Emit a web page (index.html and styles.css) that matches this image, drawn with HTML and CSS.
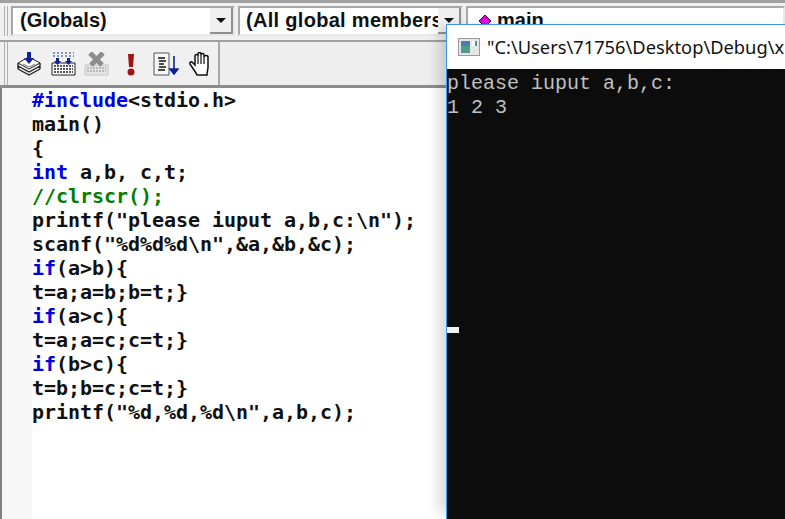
FILE: index.html
```html
<!DOCTYPE html>
<html lang="en">
<head>
<meta charset="utf-8">
<title>Visual C++ console</title>
<link rel="stylesheet" href="styles.css">
</head>
<body>
<div class="ide">
  <div class="bar bar-top">
    <div class="grip"></div>
    <div class="combo combo-a"><span class="combo-text">(Globals)</span><span class="combo-btn"><i class="arrow"></i></span></div>
    <div class="combo combo-b"><span class="combo-text">(All global members</span><span class="combo-btn"><i class="arrow"></i></span></div>
    <div class="combo combo-c"><span class="combo-text"><svg class="diamond" width="14" height="14" viewBox="0 0 14 14"><path d="M7 1 13 7 7 13 1 7Z" fill="#e000e0" stroke="#400040"/></svg>main</span></div>
  </div>
  <div class="bar bar-tools">
    <div class="grip"></div>
    <div class="tools">
      <svg class="ico i1" width="24" height="25" viewBox="0 0 24 25"><path d="M1 11 12 5 23 11 12 17Z" fill="#fff" stroke="#222"/><path d="M1 14 12 20 23 14M1 17 12 23 23 17M1 11V17M23 11V17" fill="none" stroke="#222" stroke-width="1.4"/><path d="M6 12 12 15 18 12" fill="none" stroke="#777"/><path d="M10 0H14V6H17L12 12 7 6H10Z" fill="#10209a"/></svg>
      <svg class="ico i2" width="25" height="24" viewBox="0 0 25 24"><path d="M1 11H24V23H1Z" fill="#fff" stroke="#222"/><path d="M3 14H22M3 17H22M3 20H22" stroke="#222" stroke-width="1.6" stroke-dasharray="2 1"/><path d="M5 6H8V9H10L6.500 13 3 9H5ZM16 6H19V9H21L17.500 13 14 9H16Z" fill="#10209a"/><path d="M2 1H23M2 4H23" stroke="#5a78b8" stroke-width="1.6" stroke-dasharray="2 2"/></svg>
      <svg class="ico i3" width="25" height="24" viewBox="0 0 25 24"><path d="M1 13H24V23H1Z" fill="#e4e4e4" stroke="#c4c4c4"/><path d="M3 16H22M3 19H22" stroke="#aaa" stroke-width="1.600" stroke-dasharray="2 1"/><path d="M6 1 18 13M19 1 7 13" stroke="#8c8c8c" stroke-width="5"/></svg>
      <svg class="ico i4" width="12" height="23" viewBox="0 0 12 23"><path d="M3 1H9L8 14H4Z" fill="#a01414"/><circle cx="6" cy="19" r="3.500" fill="#a01414"/></svg>
      <svg class="ico i5" width="26" height="24" viewBox="0 0 26 24"><path d="M1 1H16V23H1Z" fill="#f8f8f8" stroke="#555"/><path d="M5 6H12M6 9H13M6 12H11M6 15H13M5 18H12" stroke="#111" stroke-width="1.300"/><path d="M21 4V21M17 17 21 22 25 17Z" fill="#10209a" stroke="#10209a" stroke-width="1.600"/></svg>
      <svg class="ico i6" width="23" height="24" viewBox="0 0 23 24"><path d="M7 21 1 12C0 10 3 9 4 11L6 13V4C6 2 9 2 9 4V2C9 0 12 0 12 2V3C12 1 15 1 15 3V5C15 3 19 3 19 5V15C19 18 18 19 18 23H8Z" fill="#fff" stroke="#111" stroke-width="1.500"/><path d="M9 4V12M12 3V12M15 5V12" stroke="#111" stroke-width="1.200"/></svg>
    </div>
    <div class="tools-rest"></div>
  </div>
  <div class="editor">
    <div class="gutter"></div>
    <pre class="code"><span class="kw">#include</span>&lt;stdio.h&gt;
main()
{
<span class="kw">int</span> a,b, c,t;
<span class="cm">//clrscr();</span>
printf("please iuput a,b,c:\n");
scanf("%d%d%d\n",&amp;a,&amp;b,&amp;c);
<span class="kw">if</span>(a&gt;b){
t=a;a=b;b=t;}
<span class="kw">if</span>(a&gt;c){
t=a;a=c;c=t;}
<span class="kw">if</span>(b&gt;c){
t=b;b=c;c=t;}
printf("%d,%d,%d\n",a,b,c);</pre>
  </div>
</div>
<div class="console">
  <div class="titlebar">
    <svg class="appicon" width="22" height="18" viewBox="0 0 22 18"><rect x="0.500" y="0.500" width="21" height="17" fill="#e6e6e6" stroke="#9a9a9a"/><rect x="3" y="3" width="9" height="12" fill="#4f9a90"/><rect x="3" y="3" width="9" height="5" fill="#4a7fa8"/><rect x="14" y="3" width="5" height="5" fill="#fff"/><rect x="17" y="3" width="2" height="5" fill="#5a8f90"/></svg>
    <span class="title">"C:\Users\71756\Desktop\Debug\x</span>
  </div>
  <div class="screen">
    <pre class="output">please iuput a,b,c:
1 2 3</pre>
    <div class="cursor"></div>
  </div>
</div>
</body>
</html>
```
FILE: styles.css
```css
html, body {
  margin: 0;
  padding: 0;
  width: 785px;
  height: 519px;
  overflow: hidden;
  background: #fff;
}
.ide {
  width: 785px;
  height: 519px;
  display: flex;
  flex-direction: column;
}
.bar {
  display: flex;
  background: #f0f0f0;
  box-sizing: border-box;
}
.bar-top {
  height: 42px;
  padding: 3px 0 0 4px;
  align-items: flex-start;
  border-top: 3px solid #a0a0a0;
  border-bottom: 2px solid #a0a0a0;
  gap: 3px;
}
.grip {
  width: 4px;
  height: 100%;
  border-left: 1px solid #b0b0b0;
  border-right: 1px solid #b0b0b0;
  box-sizing: border-box;
  flex: none;
}
.bar-top .grip {
  height: 30px;
}
.combo {
  height: 30px;
  box-sizing: border-box;
  background: #fff;
  border: 2px solid #a8a8a8;
  border-right-color: #e8e8e8;
  border-bottom-color: #e8e8e8;
  display: flex;
  flex: none;
  overflow: hidden;
  position: relative;
}
.combo-a {
  width: 224px;
}
.combo-b {
  width: 225px;
}
.combo-c {
  flex: 1;
}
.combo-text {
  flex: 1;
  overflow: hidden;
  white-space: nowrap;
  font: bold 20px/25px "Liberation Sans", sans-serif;
  color: #111;
  padding-left: 7px;
}
.combo-b .combo-text {
  padding-left: 6px;
  font-size: 20px;
  letter-spacing: 0.300px;
}
.combo-c .combo-text {
  padding-left: 10px;
}
.diamond {
  vertical-align: -1px;
  margin-right: 5px;
}
.combo-btn {
  width: 23px;
  flex: none;
  background: #f0f0f0;
  border-right: 2px solid #909090;
  border-bottom: 2px solid #909090;
  box-sizing: border-box;
  display: flex;
  align-items: center;
  justify-content: center;
}
.arrow {
  width: 0;
  height: 0;
  border-left: 5px solid transparent;
  border-right: 5px solid transparent;
  border-top: 5px solid #111;
}
.bar-tools {
  height: 46px;
  border-bottom: 3px solid #8c8c8c;
  padding-left: 4px;
}
.tools {
  width: 212px;
  flex: none;
  box-sizing: border-box;
  border-right: 2px solid #a8a8a8;
  position: relative;
  display: flex;
  align-items: center;
  padding: 1px 0 0 9px;
}
.ico {
  flex: none;
}
.i2 {
  margin-left: 10px;
}
.i3 {
  margin-left: 8px;
}
.i4 {
  margin-left: 16px;
}
.i5 {
  margin-left: 16px;
}
.i6 {
  margin-left: 10px;
}
.tools-rest {
  flex: 1;
  background: #eeeeee;
}
.editor {
  flex: 1;
  display: flex;
  background: #fff;
  border-left: 2px solid #808080;
  min-height: 0;
}
.gutter {
  width: 30px;
  flex: none;
  background: #f6f6f6;
}
.code {
  margin: 0;
  font: bold 20px/24px "DejaVu Sans Mono", monospace;
  letter-spacing: -0.040px;
  color: #111;
}
.kw {
  color: #0000e6;
}
.cm {
  color: #008000;
}
.console {
  position: absolute;
  left: 446px;
  top: 24px;
  width: 339px;
  height: 495px;
  box-sizing: border-box;
  border-left: 1px solid #3c96f0;
  border-top: 1px solid #3c96f0;
  display: flex;
  flex-direction: column;
  box-shadow: -12px 0 14px -6px rgba(0, 0, 0, 0.18);
}
.titlebar {
  height: 44px;
  flex: none;
  background: #fff;
  display: flex;
  align-items: center;
  padding-left: 11px;
  gap: 7px;
  overflow: hidden;
}
.title {
  font: 18.300px/24px "Noto Sans", sans-serif;
  color: #111;
  white-space: nowrap;
}
.screen {
  flex: 1;
  background: #0c0c0c;
  position: relative;
}
.output {
  margin: 0;
  font: 20px/24px "Liberation Mono", monospace;
  color: #c0c0c0;
  padding-top: 3px;
}
.cursor {
  position: absolute;
  left: 0;
  top: 258px;
  width: 12px;
  height: 6px;
  background: #f2f2f2;
}
```
